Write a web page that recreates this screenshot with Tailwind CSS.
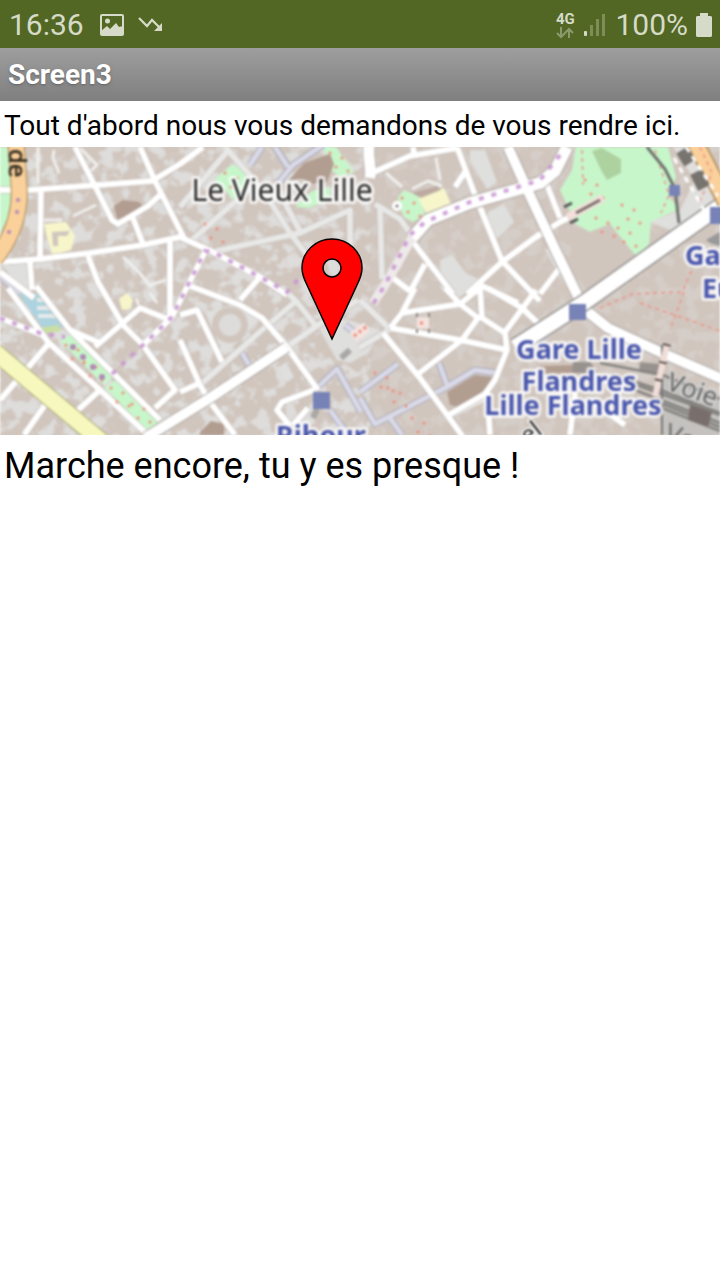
<!DOCTYPE html>
<html lang="fr">
<head>
<meta charset="utf-8">
<meta name="viewport" content="width=device-width, initial-scale=1">
<title>Screen3</title>
<script src="https://cdn.jsdelivr.net/npm/@tailwindcss/browser@4"></script>
</head>
<body class="min-h-screen bg-white font-['Roboto',sans-serif] text-black">
<div class="flex h-12 items-center justify-between bg-[#526723] pl-[9px] pr-2 pt-px text-[#d5dbc8]">
  <div class="flex items-center">
    <time class="text-[30px] leading-12">16:36</time>
    <svg class="ml-4 h-6 w-6" viewBox="0 0 24 24" fill="none" aria-label="Image"><rect x="1" y="2" width="22" height="20" rx="1" stroke="currentColor" stroke-width="2"/><circle cx="7.500" cy="8" r="2.500" fill="currentColor"/><path d="M1 18l6-5 3 3 6-6 3 4 4-1v9H1z" fill="currentColor"/></svg>
    <svg class="ml-3 h-6 w-7" viewBox="0 0 28 24" fill="none" aria-label="Tendance"><path d="M3 5l8 8 5-6 9 9" stroke="currentColor" stroke-width="2.200"/><path d="M26 10v8h-8z" fill="currentColor"/></svg>
  </div>
  <div class="flex items-center">
    <div class="flex w-5 flex-col items-center">
      <span class="text-[15px] font-bold leading-4">4G</span>
      <svg class="h-3 w-5" viewBox="0 0 20 12" fill="none" stroke="#8b9a6c" stroke-width="2"><path d="M6 0v10M2 6l4 4 4-4M14 11V2M10 6l4-4 4 4"/></svg>
    </div>
    <svg class="ml-2 h-6 w-6" viewBox="0 0 24 24" aria-label="Signal"><rect x="1" y="18" width="3" height="5" rx="1" fill="currentColor"/><path d="M7 12h3v11H7zM13 6h3v17h-3zM19 1h3v22h-3z" fill="#7d8e58"/></svg>
    <span class="ml-2 text-[30px] leading-12">100%</span>
    <svg class="ml-2 h-6 w-4" viewBox="0 0 16 24" fill="currentColor" aria-label="Batterie"><path d="M4 0h8v3h3l1 1v19l-1 1H1l-1-1V4l1-1h3z"/></svg>
  </div>
</div>
<header class="bg-linear-to-b from-[#9e9e9e] to-[#7f7f7f] px-2">
  <h1 class="text-[28px] font-bold leading-[53px] text-white text-shadow-md">Screen3</h1>
</header>
<main>
  <p class="px-1 pt-1 text-[28px] leading-[42px]">Tout d'abord nous vous demandons de vous rendre ici.</p>
  <svg class="block h-72 w-full" viewBox="0 147 720 288" preserveAspectRatio="xMidYMid slice" role="img" aria-label="Carte de Lille" font-family="Noto Sans, sans-serif">
    <defs>
      <filter id="blocks" x="0" y="0" width="100%" height="100%" color-interpolation-filters="sRGB"><feTurbulence type="fractalNoise" baseFrequency=".07" numOctaves="3" seed="8"/><feColorMatrix values="0 0 0 0 .87  0 0 0 0 .865  0 0 0 0 .86  8 0 0 0 -4"/></filter>
      <filter id="soft" x="0" y="0" width="100%" height="100%" color-interpolation-filters="sRGB"><feGaussianBlur stdDeviation=".9"/></filter>
      <g id="dots" fill="#f08a78"><circle r="1.500"/><circle cx="12" cy="5" r="1.500"/><circle cx="6" cy="14" r="1.500"/><circle cx="18" cy="18" r="1.500"/></g>
      <path id="lanes" d="M262 147l-12 18M275 147l13 20M278 183l15-18 30-20M242 353l7 12M319 386l18-17 24 43M360 392l38-28M360 398l15 26 70-36 30-18 22 3M439 363l8 22M390 418l12 17M330 410l18 25M0 276l20 17M345 325l16 12"/>
      <path id="alleys" d="M230 148L180 207M225 147l38 43 27 43 17 22M248 190l-56 50M213 252l17-4 70-15 50-23v35M285 203l16 30M295 302l-33 28-62 55M281 287l16 15 18 23M375 204l25 15 10 14M380 207l2 72M360 300l29 28M389 330l-30 18M287 347l31-22 40-25M180 340l8 14"/>
      <g id="streets">
        <path d="M0 190h30l122-9 28-17 23-17M41 187l-1 72M75 147l20 39 17 34 6 4 30-18 12-11M140 147l15 34 30 59M133 218l10 26M0 262l40-3 50-6 53-8 37-8 33 15"/>
        <path d="M170 242v76M88 256l10 26 25 43 20 20 32 45-20 18M30 262l2 28M0 272l34 26M70 330l30 13M95 347l45-39 30 12M8 288l40 54 52 48 48 45M36 286l34 44 45 45 45 45M50 342L0 400M100 390l-22 20M45 405l-21 30M0 318l45 18"/>
        <path d="M205 252l-17 33-16 32-29 28M213 252l47 25 27 18M260 277l-20 23M190 286l50 19 22 13 25 29 31 43M180 315l17-5 25 52M180 340l20 45 10 17 25 33M180 392l20-9M314 390l-32 12-5 8 13 16M308 408l-15 17"/>
        <path d="M415 288l-13 25-12 15M402 313l58-9 20-16M445 288l15 16 18 14-16 22-44 34M390 328l70 12 47 10M480 288l2 30 23 15 2 17-12 30-10 14-38 22M487 390l3 45M488 288l34 20 22 21M505 332l17-23 14-19M383 333l37 45 25 34 18 25"/>
        <path d="M372 173l38-17 47-8M413 147l1 7M457 147l18 48 27 66 38 40M465 172l-10 15M413 242l40 52M425 264l-15 28M393 278l17 13M540 234l-38 28-35 32M480 285l38 18M545 180l15 38M535 238l25-16 8-4M540 294l22-29M570 435l5-42M590 400l35 25"/>
      </g>
      <path id="avenues" d="M145 438l65-40 77-51M508 147l18 40 28 60 29 60M583 308l25 20 52 24 62 27"/>
      <path id="boulevard" d="M567 147l-12 24-15 12-70 20-42 17-16 18"/>
    </defs>
    <g filter="url(#soft)">
      <rect y="140" width="720" height="300" fill="#d1c6be"/>
      <rect y="140" width="370" height="300" filter="url(#blocks)"/>
      <rect x="370" y="140" width="350" height="300" filter="url(#blocks)" opacity=".35"/>
      <g fill="#dfdfdd">
        <path d="M317 325l15-8 20 4 30 10-14 22-18 10-13-3zM0 262l30 0 3 28-12 0zM470 150l15 0 12 32-10 7-17-28zM488 212l16-8 10 18-16 16-10-5zM440 260l12-5 14 18 12 6-8 10-15 12-14-12zM650 222l30-12 15-30-22-33 22 0 25 50-45 35zM278 368l8-6 8 15-7 5z"/>
        <path d="M545 250l12-8 22 45-8 8zM205 312l30-8 25 16-36 35z"/>
      </g>
      <circle cx="230" cy="325" r="18" fill="#d1c6be"/><circle cx="230" cy="325" r="11" fill="#dddcda"/>
      <!-- parks and water -->
      <g fill="#c8f6cb">
        <path d="M0 147h7l5 45-2 23-10 18zM576 147h92l8 30-7 20 10 12-28 13-2 22-15 16-24-36-20 8-14-8-16-34 12-20z"/>
        <path d="M216 178l15-13 17 4 1 18-15 16-9-14-9 2zM322 147h14l18 25-13 5-12-8-2-14zM295 207l17-16 18-4v13l-22 8z"/>
        <path d="M398 197l6-7 15 6 6 18-12 8-9-5-5-11zM60 341l12-8 43 42-11 10zM105 388l12-9 43 42-13 9z"/>
        <path d="M583 272l8-7 3 7-10 3z"/>
      </g>
      <path d="M570 228l20 4 20-8 26 32-45 35-20-20z" fill="#d1c6be"/>
      <path d="M592 151l10-3 19 11v14l-14 7-5-8z" fill="#aed1a0"/>
      <path d="M44 224l22-2 9 14-4 14-18 5-6-17zM418 198l26-10 7 16-25 9zM119 299l8-6 6 7-3 9-8 1z" fill="#f7f6cb"/>
      <path d="M52 232l18-1-3 5h-9v10h-5z" fill="#d1c6be"/>
      <path d="M18 293h19l26 34-18 4z" fill="#acd3df"/>
      <path d="M37 300h9M37 308h15M38 316h21" stroke="#e7e9e9" stroke-width="4"/>
      <path d="M38 328l20-3 3 6-14 2z" fill="#c9dfa2"/>
      <g fill="#b29d91"><path d="M114 206l9-6 16 2 4 4-12 9-14 4zM289 180l15-17 26-9 4 10-7 18-14 2-10-5zM447 392l28-17 17 2-8 17-26 13-8-2zM201 431l10-10 13 3v11h-25z"/><path d="M412 193l25-7 4 4-20 8z" opacity=".7"/></g>
      <!-- service alleys -->
      <g fill="none" stroke-linejoin="round">
        <use href="#lanes" stroke="#a9a9b4" stroke-width="7"/>
        <use href="#lanes" stroke="#d9d9e8" stroke-width="5"/>
        <path d="M535 345l42-38 130-86" stroke="#d2d2de" stroke-width="7"/>
        <use href="#alleys" stroke="#b9b2ad" stroke-width="7"/>
        <use href="#alleys" stroke="#e8e8e7" stroke-width="6"/>
        <path d="M54 150l-1 8 6 15M80 148l17 17-8 8M73 216l23-11M44 220h18M123 257l15 14 13 16M150 285l16-5M412 189l16-8 14 5M386 173l16 14M436 158l4 22M38 147v36M450 417l40-20M140 308l-4-10M150 293l7 10" stroke="#efefed" stroke-width="3"/>
        <!-- streets and main roads -->
        <use href="#streets" stroke="#b5aca6" stroke-width="7"/>
        <path d="M370 140c-4 16 2 24 0 38" stroke="#b5aca6" stroke-width="13"/>
        <use href="#streets" stroke="#fff" stroke-width="6"/>
        <path d="M370 140c-4 16 2 24 0 38" stroke="#fff" stroke-width="11"/>
        <use href="#avenues" stroke="#aba5a1" stroke-width="12"/>
        <use href="#boulevard" stroke="#aba5a1" stroke-width="14"/>
        <use href="#avenues" stroke="#fff" stroke-width="10"/>
        <use href="#boulevard" stroke="#fff" stroke-width="12"/>
        <path d="M412 238l-27 47-12 18" stroke="#eeeaea" stroke-width="9"/>
        <path d="M726 202L585 302l-70 45" stroke="#94918f" stroke-width="18"/>
        <path d="M726 202L585 302l-70 45" stroke="#fff" stroke-width="15"/>
        <path d="M16 140l3 45q3 40-24 74" stroke="#a88958" stroke-width="17"/>
        <path d="M16 140l3 45q3 40-24 74" stroke="#fad09b" stroke-width="15"/>
        <path d="M694 140l32 62" stroke="#a88958" stroke-width="18"/>
        <path d="M694 140l32 62" stroke="#fad09b" stroke-width="15"/>
        <path d="M-5 352l106 89" stroke="#aaa978" stroke-width="18"/>
        <path d="M-5 352l106 89" stroke="#f6f8be" stroke-width="16"/>
      </g>
      <!-- administrative boundary -->
      <path d="M0 318l40 15 25 4M112 374l31-29 29-28 33-66 8 1 47 25 27 15 16-18M560 155l-20 25-70 22-45 20-15 13-25 50-15 24" fill="none" stroke="#c692d0" stroke-opacity=".85" stroke-width="4" stroke-dasharray="5 8"/>
      <!-- railway yard -->
      <path d="M540 366l36-1 3 8-39 1z" fill="#b29d91"/><path d="M573 362h17l8 10-9 2-17-2zM640 362l20 2 2 12-23-4z" fill="#98928f"/>
      <path d="M663 375l57 20v40h-57z" fill="#c4c2be"/>
      <path d="M600 363l63 12 57 24M612 374l51 17 57 22M628 382l92 33M635 390l85 33M650 399l70 28M662 408l58 23" fill="none" stroke="#858380" stroke-width="2.500"/>
      <path d="M690 405l22 7-4 15-20-7z" fill="#786f6c"/>
      <path d="M662 345v90" stroke="#777" stroke-width="2"/>
      <path d="M667 344l-12 53" stroke="#f1ddd8" stroke-width="6"/><path d="M667 344l-12 53" stroke="#554e4c" stroke-width="8" stroke-dasharray="2 16"/>
      <!-- footpaths and steps -->
      <g fill="none" stroke="#ee9185" stroke-width="1.500" stroke-dasharray="4 4"><path d="M600 308l32-14 50-2 10-22M640 303l80 28M684 292l-14 38M582 150l1 35M655 150l14 45-8 18M700 147l12 26-12 28"/></g>
      <g><use href="#dots" x="66" y="345"/><use href="#dots" x="84" y="362"/><use href="#dots" x="111" y="388"/><use href="#dots" x="132" y="404"/><use href="#dots" x="225" y="173"/><use href="#dots" x="330" y="153"/><use href="#dots" x="402" y="198"/><use href="#dots" x="585" y="180"/><use href="#dots" x="596" y="218"/><use href="#dots" x="622" y="205"/><use href="#dots" x="618" y="228"/><use href="#dots" x="375" y="373"/><use href="#dots" x="388" y="388"/><use href="#dots" x="412" y="418"/><use href="#dots" x="205" y="224"/></g>
      <path d="M568 217l35-19" stroke="#f4dfdb" stroke-width="8"/><path d="M576 213l24-13" stroke="#79706a" stroke-width="3"/><path d="M564 207l8-4M570 223l8-4" stroke="#555" stroke-width="3"/>
      <path d="M353 337l14-10M417 323h12" stroke="#f5e3df" stroke-width="11"/><path d="M354 336l12-9M420 323h6" stroke="#ef8a79" stroke-width="3" stroke-dasharray="3 3"/>
      <path d="M341 358l9-8M313 418l4-9" stroke="#aaa7a4" stroke-width="6"/>
      <path d="M417 313v20M429 313v20" stroke="#8c8783" stroke-width="2" stroke-dasharray="4 12"/>
      <path d="M647 147l18 22 10 20 4 34" fill="none" stroke="#6d726c" stroke-width="3"/>
      <path d="M682 150l8 13M696 172l8 16" stroke="#77736f" stroke-width="13"/>
      <path d="M674 158l30 52M686 147l32 49" stroke="#fff" stroke-width="3" stroke-dasharray="6 5"/>
      <path d="M706 240l14-8v14l-10-3z" fill="#999"/>
      <circle cx="397" cy="206" r="5" fill="#fff"/><circle cx="397" cy="206" r="1.500" fill="#777"/>
      <g fill="#b18ab6"><circle cx="18" cy="200" r="2"/><circle cx="17" cy="212" r="2"/><circle cx="9" cy="232" r="2"/><circle cx="73" cy="347" r="3"/><circle cx="83" cy="357" r="3"/><circle cx="93" cy="367" r="3"/><circle cx="102" cy="377" r="3"/></g>
      <!-- stations -->
      <g fill="#7782b6"><path d="M313 392h17v17h-17zM569 304h17v16h-17zM669 185h11v11h-11zM710 207h17v17h-17z"/></g>
      <!-- place names -->
      <g paint-order="stroke" stroke="#fff" stroke-opacity=".75" stroke-width="6" stroke-linejoin="round">
        <text x="282" y="201" text-anchor="middle" font-size="30" fill="#2c2c2c">Le Vieux Lille</text>
        <g font-size="27" font-weight="700" fill="#4a57ad" text-anchor="middle">
          <text x="579" y="359">Gare Lille</text><text x="579" y="391">Flandres</text><text x="573" y="415">Lille Flandres</text><text x="321" y="445">Rihour</text>
          <text x="685" y="265" text-anchor="start">Ga</text><text x="702" y="298" text-anchor="start">Eu</text>
        </g>
      </g>
      <text transform="translate(9 149) rotate(90)" font-size="24" fill="#3a3224" stroke="#3a3224" stroke-width=".8">de</text>
      <text transform="translate(665 389) rotate(20)" font-size="26" fill="#666" paint-order="stroke" stroke="#d5d5d5" stroke-width="3">Voie</text>
      <text transform="translate(528 445) rotate(-38)" font-size="24" fill="#222" paint-order="stroke" stroke="#fff" stroke-width="3">el</text>
      <text transform="translate(663 440) rotate(20)" font-size="26" fill="#707070">Vo</text>
    </g>
    <!-- destination marker -->
    <path fill="#f00" fill-rule="evenodd" stroke="#000" stroke-width="1.500" d="M332 339l-25-54c-3-6-5-11-5-17a30 29 0 0 1 60 0c0 6-2 11-5 17zM332 259a9 9 0 1 0 0 18a9 9 0 1 0 0-18z"/>
  </svg>
  <p class="px-1 text-[36px] leading-[62px]">Marche encore, tu y es presque !</p>
</main>
</body>
</html>
